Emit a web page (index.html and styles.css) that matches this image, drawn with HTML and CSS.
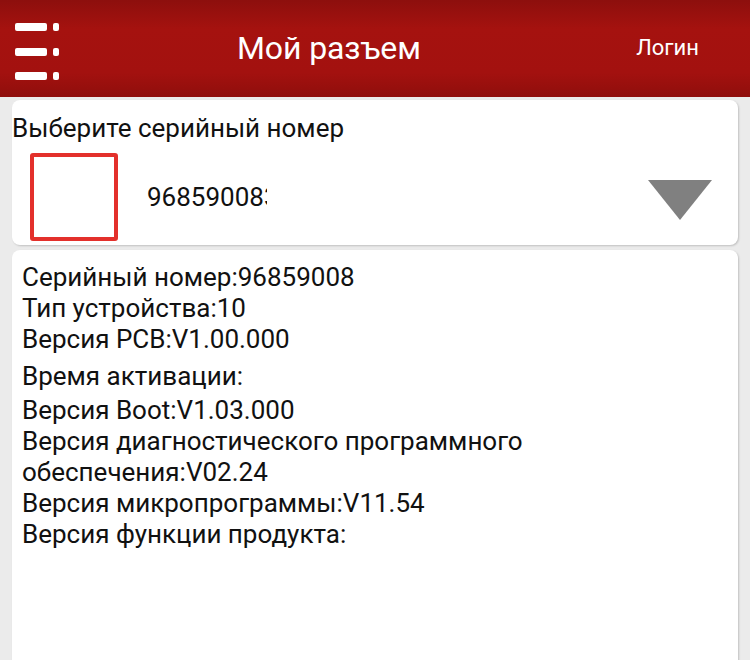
FILE: index.html
```html
<!DOCTYPE html>
<html lang="ru">
<head>
  <meta charset="UTF-8" />
  <title>Мой разъем</title>
  <link rel="stylesheet" href="styles.css">
</head>
<body>
  <div class="top-bar">
    <div class="menu-btn">
      <svg width="46" height="60" viewBox="0 0 46 60">
        <rect x="0" y="0" width="32" height="8" rx="2" fill="#fff"/>
        <rect x="38" y="0" width="6" height="8" rx="2" fill="#fff"/>
        <rect x="0" y="25" width="32" height="8" rx="2" fill="#fff"/>
        <rect x="38" y="25" width="6" height="8" rx="2" fill="#fff"/>
        <rect x="0" y="49" width="32" height="8" rx="2" fill="#fff"/>
        <rect x="38" y="49" width="6" height="8" rx="2" fill="#fff"/>
      </svg>
    </div>
    <div class="title">Мой разъем</div>
    <div class="login">Логин</div>
  </div>

  <div class="content">
    <div class="card select-card">
      <div class="select-label">Выберите серийный номер</div>
      <div class="select-row">
        <div class="check-box"></div>
        <div class="serial">968590083</div>
        <div class="arrow"></div>
      </div>
    </div>

    <div class="card info-card">
      <div class="info-line">Серийный номер:96859008</div>
      <div class="info-line">Тип устройства:10</div>
      <div class="info-line">Версия PCB:V1.00.000</div>
      <div class="info-line gap">Время активации:</div>
      <div class="info-line gap-sm">Версия Boot:V1.03.000</div>
      <div class="info-line">Версия диагностического программного<br>обеспечения:V02.24</div>
      <div class="info-line">Версия микропрограммы:V11.54</div>
      <div class="info-line">Версия функции продукта:</div>
    </div>
  </div>
</body>
</html>
```

FILE: styles.css
```css
* { box-sizing: border-box; }
body {
  margin: 0;
  padding: 0;
  background: #ebebeb;
  font-family: Roboto, "Noto Sans", sans-serif;
  color: #111;
  height: 660px;
  overflow: hidden;
}
.top-bar {
  height: 97px;
  background: linear-gradient(to bottom, #8d0f0d 0%, #a5120f 30%, #a3110f 75%, #8f0e0c 100%);
  display: flex;
  align-items: center;
  color: #fff;
}
.menu-btn {
  width: 200px;
  padding-left: 15px;
  padding-top: 8px;
  display: flex;
}
.title {
  flex: 1;
  text-align: left;
  font-size: 32px;
  letter-spacing: -0.1px;
  padding-left: 37px;
  padding-bottom: 2px;
}
.login {
  font-size: 22px;
  padding-right: 51px;
  padding-bottom: 2px;
}
.content {
  padding: 3px 12px 0 12px;
  display: flex;
  flex-direction: column;
  gap: 5px;
}
.card {
  background: #fff;
  border-radius: 8px;
  box-shadow: 1px 1px 2px rgba(0, 0, 0, 0.18);
}
.select-card {
  height: 145px;
  padding-top: 13px;
}
.select-label {
  font-size: 26px;
  line-height: 30px;
}
.select-row {
  display: flex;
  align-items: center;
  margin-top: 10px;
}
.check-box {
  width: 88px;
  height: 88px;
  margin-left: 18px;
  border: 4px solid #e3302b;
  border-radius: 3px;
}
.serial {
  font-size: 26px;
  margin-left: 29px;
  width: 120px;
  overflow: hidden;
  white-space: nowrap;
}
.arrow {
  margin-left: auto;
  margin-right: 26px;
  margin-top: 6px;
  width: 0;
  height: 0;
  border-left: 32px solid transparent;
  border-right: 32px solid transparent;
  border-top: 40px solid #808080;
}
.info-card {
  height: 420px;
  padding: 12px 10px;
}
.info-line {
  font-size: 26px;
  line-height: 31px;
}
.info-line.gap {
  margin-top: 6px;
}
.info-line.gap-sm {
  margin-top: 3px;
}
```
